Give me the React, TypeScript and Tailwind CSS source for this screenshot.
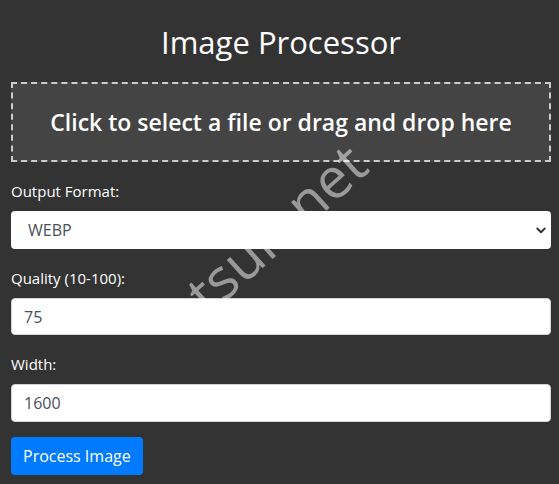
export default function App() {
  return (
    <div className="relative min-h-[484px] overflow-hidden bg-[#333333] font-['Open_Sans','Noto_Sans',sans-serif] text-white">
      <div className="ml-[11px] mr-[8px] pt-[23px]">
        <h1 className="mb-[21px] text-center text-[31px] font-medium leading-[38px]">
          Image Processor
        </h1>

        <div className="mb-[17px] flex h-[80px] items-center justify-center border-2 border-dashed border-[#cccccc] bg-[#444444]">
          <span className="text-[23px] font-semibold">
            Click to select a file or drag and drop here
          </span>
        </div>

        <div className="mb-[17px]">
          <label className="mb-2 block text-[15px] leading-6">Output Format:</label>
          <div className="relative">
            <select
              defaultValue="webp"
              className="block h-[38px] w-full appearance-none rounded bg-white pl-[17px] pr-3 text-[16px] text-[#495057]"
            >
              <option value="jpeg">JPEG</option>
              <option value="png">PNG</option>
              <option value="webp">WEBP</option>
            </select>
            <svg
              className="pointer-events-none absolute right-[4px] top-[13px] h-3 w-3 text-[#333]"
              viewBox="0 0 16 16"
              fill="none"
              stroke="currentColor"
              strokeWidth={2.5}
            >
              <path d="M3 6l5 5 5-5" strokeLinecap="round" strokeLinejoin="round" />
            </svg>
          </div>
        </div>

        <div className="mb-[17px]">
          <label className="mb-2 block text-[15px] leading-6">Quality (10-100):</label>
          <input
            type="number"
            defaultValue={75}
            className="block h-[37px] w-full rounded border border-[#ced4da] bg-white px-3 text-[16px] text-[#495057]"
          />
        </div>

        <div className="mb-[15px]">
          <label className="mb-2 block text-[15px] leading-6">Width:</label>
          <input
            type="number"
            defaultValue={1600}
            className="block h-[38px] w-full rounded border border-[#ced4da] bg-white px-3 text-[16px] text-[#495057]"
          />
        </div>

        <button className="h-[38px] rounded bg-[#007bff] px-3 text-[16px] text-white">
          Process Image
        </button>
      </div>

      {/* watermark */}
      <div className="pointer-events-none absolute left-[166px] top-[199px] rotate-[-42deg] text-[56px] leading-none text-white/50">
        tsuri.net
      </div>
    </div>
  );
}
